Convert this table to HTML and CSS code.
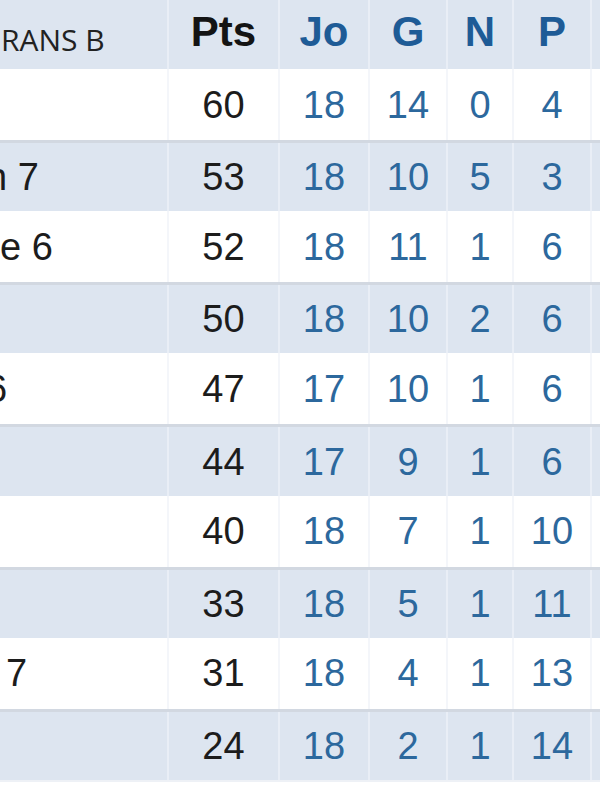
FILE: index.html
```html
<!DOCTYPE html>
<html lang="fr">
<head>
<meta charset="utf-8">
<title>Classement</title>
<link rel="stylesheet" href="styles.css">
</head>
<body>
<div class="table">
  <div class="row head">
    <div class="cell team"><span class="title">RANS B</span></div>
    <div class="cell hpts">Pts</div>
    <div class="cell hblue">Jo</div>
    <div class="cell hblue">G</div>
    <div class="cell hblue">N</div>
    <div class="cell hblue">P</div>
    <div class="cell"></div>
  </div>
  <div class="row light">
    <div class="cell team"></div>
    <div class="cell pts">60</div><div class="cell num">18</div><div class="cell num">14</div><div class="cell num">0</div><div class="cell num">4</div><div class="cell"></div>
  </div>
  <div class="row dark">
    <div class="cell team"><span class="name cut-a">n 7</span></div>
    <div class="cell pts">53</div><div class="cell num">18</div><div class="cell num">10</div><div class="cell num">5</div><div class="cell num">3</div><div class="cell"></div>
  </div>
  <div class="row light">
    <div class="cell team"><span class="name cut-b">e 6</span></div>
    <div class="cell pts">52</div><div class="cell num">18</div><div class="cell num">11</div><div class="cell num">1</div><div class="cell num">6</div><div class="cell"></div>
  </div>
  <div class="row dark">
    <div class="cell team"></div>
    <div class="cell pts">50</div><div class="cell num">18</div><div class="cell num">10</div><div class="cell num">2</div><div class="cell num">6</div><div class="cell"></div>
  </div>
  <div class="row light">
    <div class="cell team"><span class="name cut-a">6</span></div>
    <div class="cell pts">47</div><div class="cell num">17</div><div class="cell num">10</div><div class="cell num">1</div><div class="cell num">6</div><div class="cell"></div>
  </div>
  <div class="row dark">
    <div class="cell team"></div>
    <div class="cell pts">44</div><div class="cell num">17</div><div class="cell num">9</div><div class="cell num">1</div><div class="cell num">6</div><div class="cell"></div>
  </div>
  <div class="row light">
    <div class="cell team"></div>
    <div class="cell pts">40</div><div class="cell num">18</div><div class="cell num">7</div><div class="cell num">1</div><div class="cell num">10</div><div class="cell"></div>
  </div>
  <div class="row dark">
    <div class="cell team"></div>
    <div class="cell pts">33</div><div class="cell num">18</div><div class="cell num">5</div><div class="cell num">1</div><div class="cell num">11</div><div class="cell"></div>
  </div>
  <div class="row light">
    <div class="cell team"><span class="name cut-c">7</span></div>
    <div class="cell pts">31</div><div class="cell num">18</div><div class="cell num">4</div><div class="cell num">1</div><div class="cell num">13</div><div class="cell"></div>
  </div>
  <div class="row dark last">
    <div class="cell team"></div>
    <div class="cell pts">24</div><div class="cell num">18</div><div class="cell num">2</div><div class="cell num">1</div><div class="cell num">14</div><div class="cell"></div>
  </div>
</div>
</body>
</html>
```
FILE: styles.css
```css
html, body {
  margin: 0;
  padding: 0;
  background: #ffffff;
  overflow: hidden;
}

body {
  width: 600px;
  height: 800px;
  font-family: "Liberation Sans", Arial, sans-serif;
}

.table {
  display: flex;
  flex-direction: column;
  width: 600px;
}

.row {
  display: grid;
  grid-template-columns: 167px 111px 90px 78px 66px 78px 10px;
  height: 71.1px;
  box-sizing: border-box;
}

.row.head {
  height: 69px;
  background: #dde5f0;
}

.row.light {
  background: #ffffff;
}

.row.dark {
  background: #dde5f0;
  border-top: 3px solid #d2d8e1;
}

.row.last {
  border-bottom: 2px solid #eef1f6;
  height: 73px;
}

.cell {
  display: flex;
  align-items: center;
  justify-content: center;
  box-sizing: border-box;
  border-left: 2px solid #e9eef6;
  line-height: 1;
  white-space: nowrap;
}

.row.light .cell {
  border-left-color: #f4f6fa;
}

.cell.team {
  justify-content: flex-start;
  border-left: none;
  overflow: visible;
}

.head .cell {
  padding-bottom: 6px;
  font-size: 42px;
  font-weight: 700;
}

.head .cell.team {
  padding-bottom: 0;
  padding-top: 10px;
}

.title {
  font-family: "Open Sans", "Liberation Sans", sans-serif;
  font-size: 30px;
  font-weight: 400;
  color: #222222;
  margin-left: 1px;
}

.hpts {
  color: #141414;
}

.hblue {
  color: #1e5b96;
}

.pts,
.num,
.name {
  font-size: 38px;
  font-weight: 400;
}

.pts {
  color: #1c1c1c;
}

.num {
  color: #2c689d;
}

.name {
  color: #1c1c1c;
}

.cut-a {
  margin-left: -14px;
}

.cut-b {
  margin-left: 0;
}

.cut-c {
  margin-left: 6px;
}
```
